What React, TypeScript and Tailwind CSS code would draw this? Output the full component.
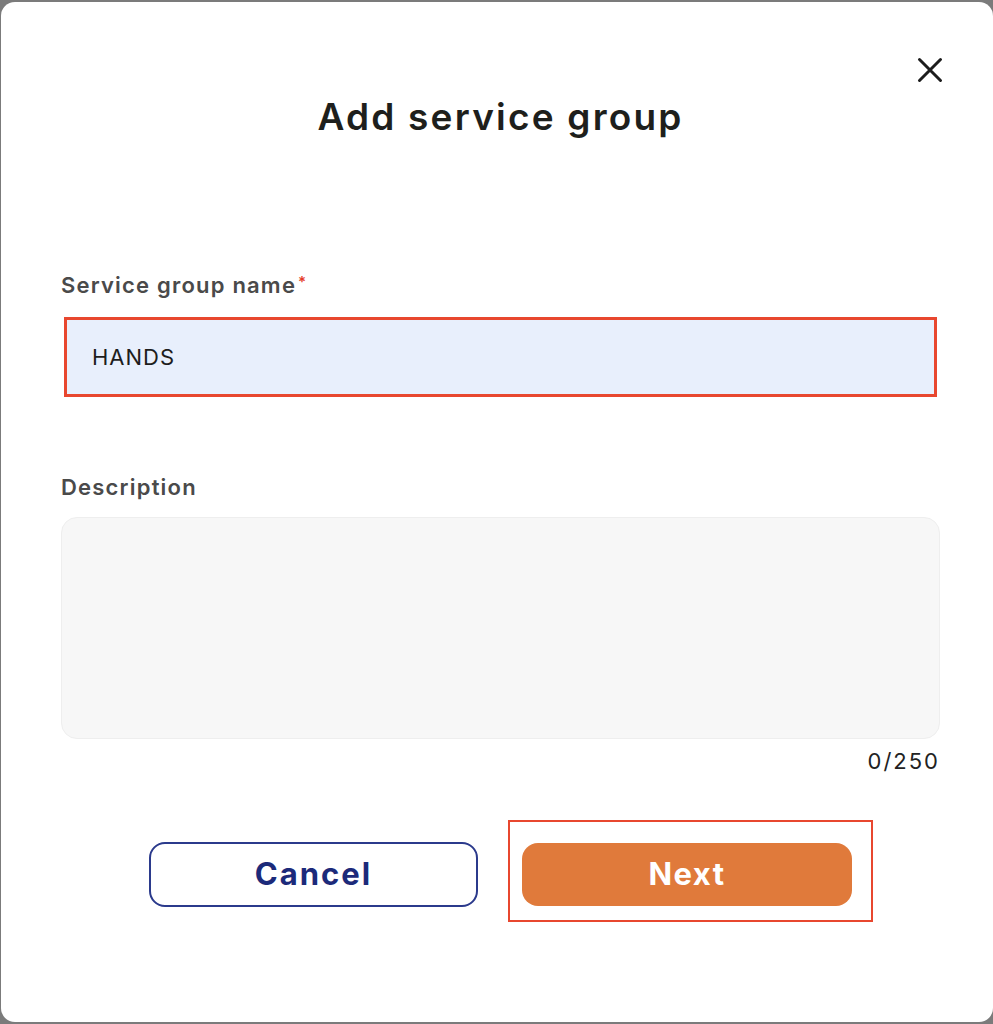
import React from "react";

const AddServiceGroupModal: React.FC = () => {
  return (
    <div className="h-[1024px] w-full bg-[#7b7b7b] pt-[2px] pb-[2px] pl-[1px] font-['Inter',sans-serif]">
      <div className="relative h-full rounded-[14px] bg-white">
        {/* Close button */}
        <button className="absolute right-[49px] top-[54px] text-[#1c1c1c]">
          <svg width="28" height="28" viewBox="0 0 28 28" fill="none">
            <path d="M3.5 3.5L24.5 24.5M24.5 3.5L3.5 24.5" stroke="currentColor" strokeWidth="3" strokeLinecap="round" />
          </svg>
        </button>

        <div className="flex flex-col pl-[60px] pr-[53px] pt-[93px]">
          <h2 className="text-center text-[37px] font-semibold leading-[44px] tracking-[2.2px] text-[#1e1f1c]">
            Add service group
          </h2>

          {/* Name field */}
          <label className="mt-[132px] text-[22px] font-semibold leading-[28px] tracking-[1.2px] text-[#4a4a4a]">
            Service group name<span className="relative -top-[6px] ml-[2px] text-[15px] text-[#e53a2a]">*</span>
          </label>
          <div className="mx-[3px] mt-[15px] flex h-[80px] items-center border-[3px] border-[#e8472f] bg-[#e8effc] px-[25px]">
            <span className="text-[22px] leading-[28px] tracking-[1px] text-[#1d1d1d]">HANDS</span>
          </div>

          {/* Description field */}
          <label className="mt-[76px] text-[22px] font-semibold leading-[28px] tracking-[1.2px] text-[#4a4a4a]">
            Description
          </label>
          <div className="mt-[16px] h-[222px] rounded-[16px] border border-[#eeeeee] bg-[#f7f7f7]" />
          <p className="mt-[10px] text-right text-[22px] leading-[24px] tracking-[2px] text-[#222222]">0/250</p>

          {/* Actions */}
          <div className="mt-[47px] flex items-start pl-[88px]">
            <button className="mt-[22px] h-[65px] w-[329px] rounded-[16px] border-2 border-[#2b3a8c] bg-white text-[31px] font-bold tracking-[2px] text-[#1c2a7a]">
              Cancel
            </button>
            <div className="ml-[30px] border-2 border-[#e8472f] pb-[14px] pl-[12px] pr-[19px] pt-[21px]">
              <button className="h-[63px] w-[330px] rounded-[16px] bg-[#e07a3b] text-[31px] font-bold tracking-[1.5px] text-white">
                Next
              </button>
            </div>
          </div>
        </div>
      </div>
    </div>
  );
};

export default function App() {
  return <AddServiceGroupModal />;
}
